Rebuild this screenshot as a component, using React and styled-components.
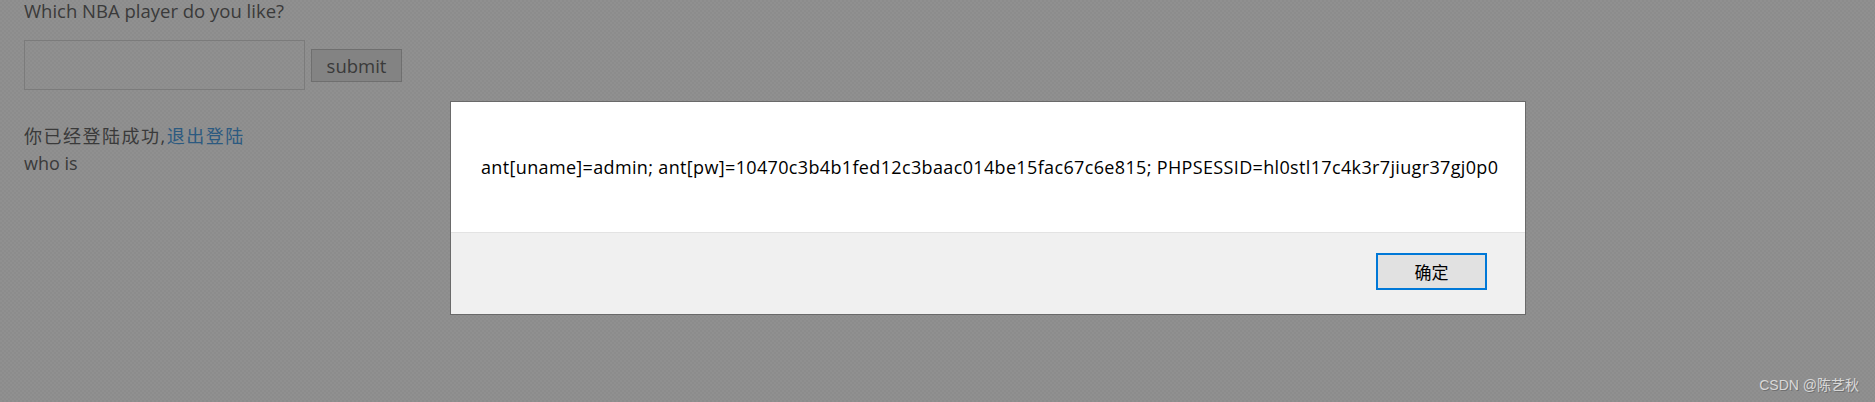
import React from 'react';
import styled, { createGlobalStyle } from 'styled-components';

const GlobalStyle = createGlobalStyle`
    html, body {
        margin: 0;
        padding: 0;
        background: #8e8e8e;
    }
    body {
        width: 1875px;
        height: 402px;
        overflow: hidden;
    }
`;

const Page = styled.div`
    position: relative;
    width: 1875px;
    height: 402px;
    padding-left: 24px;
    box-sizing: border-box;
    background-color: #8e8e8e;
    background-image: repeating-conic-gradient(#8c8c8c 0% 25%, #909090 0% 50%);
    background-size: 4px 4px;
    font-family: 'Open Sans', 'Noto Sans CJK SC', sans-serif;
    color: #3a3a3a;
    font-size: 18px;
`;

const Question = styled.p`
    margin: 0;
    font-size: 18.5px;
    line-height: 1.2;
`;

const FormRow = styled.form`
    display: flex;
    align-items: center;
    gap: 6px;
    margin-top: 18px;
`;

const TextInput = styled.input`
    width: 281px;
    height: 50px;
    box-sizing: border-box;
    border: 1px solid #7b7b7b;
    background: transparent;
    outline: none;
`;

const SubmitButton = styled.button`
    width: 91px;
    height: 33px;
    box-sizing: border-box;
    border: 1px solid #6f6f6f;
    background: #838383;
    color: #3a3a3a;
    font-family: 'Open Sans', sans-serif;
    font-size: 18.5px;
    padding: 0;
`;

const Status = styled.div`
    margin-top: 33px;
    line-height: 27px;
`;

const Greeting = styled.span`
    letter-spacing: 1.5px;
`;

const LogoutLink = styled.a`
    color: #2c5a80;
    text-decoration: none;
`;

const Dialog = styled.div`
    position: absolute;
    left: 450px;
    top: 101px;
    width: 1076px;
    height: 214px;
    box-sizing: border-box;
    border: 1px solid #6a6a6a;
    display: flex;
    flex-direction: column;
    color: #000;
`;

const DialogBody = styled.div`
    height: 130px;
    background: #fff;
    display: flex;
    align-items: center;
    padding-left: 30px;
    font-family: 'Open Sans', 'Noto Sans CJK SC', sans-serif;
    font-size: 18px;
    letter-spacing: 0.35px;
    border-bottom: 1px solid #e3e3e3;
    white-space: nowrap;
`;

const DialogFooter = styled.div`
    flex: 1;
    background: #f0f0f0;
    display: flex;
    justify-content: flex-end;
    align-items: flex-start;
    padding: 20px 38px 0 0;
`;

const OkButton = styled.button`
    width: 111px;
    height: 37px;
    box-sizing: border-box;
    border: 2px solid #0078d7;
    background: #e1e1e1;
    color: #000;
    font-family: 'Noto Sans CJK SC', sans-serif;
    font-size: 17px;
    padding: 0;
`;

const Watermark = styled.span`
    position: absolute;
    right: 16px;
    bottom: 8px;
    font-family: 'Liberation Sans', 'Noto Sans CJK SC', sans-serif;
    font-size: 14px;
    color: #d8d8d8;
    text-shadow: 1px 1px 0 #707070;
`;

export default function App() {
    return (
        <>
            <GlobalStyle />
            <Page>
                <Question>Which NBA player do you like?</Question>
                <FormRow onSubmit={(e) => e.preventDefault()}>
                    <TextInput type="text" />
                    <SubmitButton type="submit">submit</SubmitButton>
                </FormRow>
                <Status>
                    <Greeting>
                        你已经登陆成功,<LogoutLink href="#">退出登陆</LogoutLink>
                    </Greeting>
                    <br />
                    who is
                </Status>
                <Dialog>
                    <DialogBody>
                        ant[uname]=admin; ant[pw]=10470c3b4b1fed12c3baac014be15fac67c6e815; PHPSESSID=hl0stl17c4k3r7jiugr37gj0p0
                    </DialogBody>
                    <DialogFooter>
                        <OkButton>确定</OkButton>
                    </DialogFooter>
                </Dialog>
                <Watermark>CSDN @陈艺秋</Watermark>
            </Page>
        </>
    );
}
